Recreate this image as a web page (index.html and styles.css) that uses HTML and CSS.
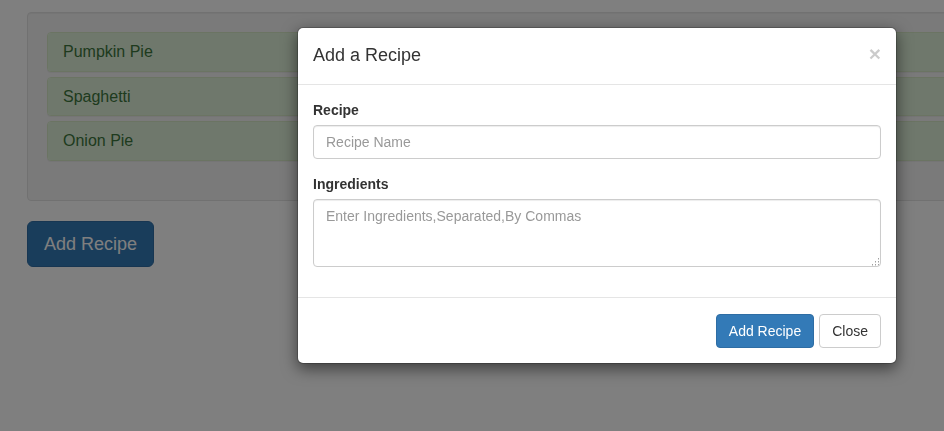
FILE: index.html
```html
<!DOCTYPE html>
<html>
<head>
<meta charset="utf-8">
<title>Recipe Box</title>
<link rel="stylesheet" href="styles.css">
</head>
<body>
<div class="page">
  <div class="well">
    <div class="panel-group">
      <div class="panel"><div class="panel-heading"><h4 class="panel-title">Pumpkin Pie</h4></div></div>
      <div class="panel"><div class="panel-heading"><h4 class="panel-title">Spaghetti</h4></div></div>
      <div class="panel"><div class="panel-heading"><h4 class="panel-title">Onion Pie</h4></div></div>
    </div>
  </div>
  <button class="btn btn-primary btn-lg">Add Recipe</button>
</div>

<div class="backdrop"></div>

<div class="modal">
  <div class="modal-content">
    <div class="modal-header">
      <button class="close" type="button">&times;</button>
      <h4 class="modal-title">Add a Recipe</h4>
    </div>
    <div class="modal-body">
      <div class="form-group">
        <label class="label">Recipe</label>
        <input class="form-control" type="text" placeholder="Recipe Name">
      </div>
      <div class="form-group">
        <label class="label">Ingredients</label>
        <div class="textarea-wrap">
          <textarea class="form-control textarea" placeholder="Enter Ingredients,Separated,By Commas"></textarea>
          <svg class="grip" width="10" height="10" viewBox="0 0 10 10">
            <g fill="#a0a0a0">
              <rect x="8" y="2" width="1" height="1"/>
              <rect x="5" y="5" width="1" height="1"/>
              <rect x="8" y="5" width="1" height="1"/>
              <rect x="2" y="8" width="1" height="1"/>
              <rect x="5" y="8" width="1" height="1"/>
              <rect x="8" y="8" width="1" height="1"/>
            </g>
            <g fill="#d0d0d0">
              <rect x="8" y="3" width="1" height="1"/>
              <rect x="5" y="6" width="1" height="1"/>
              <rect x="8" y="6" width="1" height="1"/>
              <rect x="2" y="9" width="1" height="1"/>
              <rect x="5" y="9" width="1" height="1"/>
              <rect x="8" y="9" width="1" height="1"/>
            </g>
          </svg>
        </div>
      </div>
    </div>
    <div class="modal-footer">
      <button class="btn btn-primary">Add Recipe</button>
      <button class="btn btn-default">Close</button>
    </div>
  </div>
</div>
</body>
</html>
```

FILE: styles.css
```css
* { box-sizing: border-box; }
html, body { margin: 0; padding: 0; overflow: hidden; }
body {
  width: 944px;
  height: 431px;
  background: #fff;
  font-family: "Liberation Sans", Arial, Helvetica, sans-serif;
  font-size: 14px;
  line-height: 1.42857143;
  color: #333;
  position: relative;
}
.page {
  padding: 12px 0 0 27px;
  overflow: hidden;
}
.well {
  margin-right: -20px;
  padding: 19px;
  margin-bottom: 20px;
  background: #f5f5f5;
  border: 1px solid #e3e3e3;
  border-radius: 4px;
  box-shadow: inset 0 1px 1px rgba(0,0,0,.05);
}
.panel-group {
  display: flex;
  flex-direction: column;
  gap: 5px;
  margin-bottom: 20px;
  margin-right: -20px;
}
.panel {
  background: #fff;
  border: 1px solid #d6e9c6;
  border-radius: 4px;
  box-shadow: 0 1px 1px rgba(0,0,0,.05);
}
.panel-heading {
  padding: 10px 15px;
  background: #dff0d8;
  color: #3c763d;
  border-radius: 3px;
}
.panel-title {
  margin: 0;
  font-size: 16px;
  font-weight: 500;
  line-height: 1.1;
}
.btn {
  display: inline-block;
  margin: 0;
  padding: 6px 12px;
  font-family: inherit;
  font-size: 14px;
  line-height: 1.42857143;
  font-weight: 400;
  border: 1px solid transparent;
  border-radius: 4px;
  cursor: pointer;
}
.btn-primary {
  color: #fff;
  background: #337ab7;
  border-color: #2e6da4;
}
.btn-default {
  color: #333;
  background: #fff;
  border-color: #ccc;
}
.btn-lg {
  padding: 10px 16px;
  font-size: 18px;
  line-height: 1.3333333;
  border-radius: 6px;
}
.backdrop {
  position: fixed;
  inset: 0;
  background: #000;
  opacity: .5;
}
.modal {
  position: absolute;
  left: 297px;
  top: 27px;
  width: 600px;
}
.modal-content {
  background: #fff;
  background-clip: padding-box;
  border: 1px solid rgba(0,0,0,.2);
  border-radius: 6px;
  box-shadow: 0 5px 15px rgba(0,0,0,.5);
}
.modal-header {
  padding: 15px;
  border-bottom: 1px solid #e5e5e5;
}
.modal-title {
  margin: 0;
  font-size: 18px;
  font-weight: 500;
  line-height: 1.42857143;
}
.close {
  float: right;
  margin-top: 0;
  padding: 0;
  background: transparent;
  border: 0;
  font-family: inherit;
  font-size: 21px;
  font-weight: 700;
  line-height: 1;
  color: #000;
  text-shadow: 0 1px 0 #fff;
  opacity: .2;
}
.modal-body {
  padding: 15px;
}
.form-group {
  margin-bottom: 15px;
}
.label {
  display: block;
  margin-bottom: 5px;
  font-weight: 700;
}
.form-control {
  display: block;
  width: 100%;
  height: 34px;
  padding: 6px 12px;
  font-family: inherit;
  font-size: 14px;
  line-height: 1.42857143;
  color: #555;
  background: #fff;
  border: 1px solid #ccc;
  border-radius: 4px;
  box-shadow: inset 0 1px 1px rgba(0,0,0,.075);
  margin: 0;
}
.form-control::placeholder { color: #999; }
.textarea-wrap {
  position: relative;
  margin-top: 1px;
}
.textarea {
  height: 68px;
  resize: none;
}
.grip {
  position: absolute;
  right: 1px;
  bottom: 1px;
}
.modal-footer {
  display: flex;
  justify-content: flex-end;
  gap: 5px;
  padding: 16px 15px 15px;
  border-top: 1px solid #e5e5e5;
}
```
